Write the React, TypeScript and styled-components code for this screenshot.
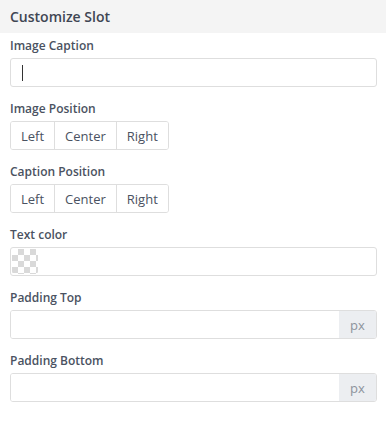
import React from 'react';
import styled, { createGlobalStyle } from 'styled-components';

const GlobalStyle = createGlobalStyle`
  html, body {
    margin: 0;
    padding: 0;
    background: #fff;
  }
  body {
    font-family: "Open Sans", "Liberation Sans", sans-serif;
    color: #4a5261;
  }
`;

const Panel = styled.div`
  width: 386px;
  background: #fff;
`;

const Header = styled.div`
  height: 33px;
  background: #f4f4f4;
  display: flex;
  align-items: center;
  padding: 0 10px;
  font-size: 14px;
  font-weight: 600;
  color: #3f4653;
`;

const Body = styled.div`
  display: flex;
  flex-direction: column;
  gap: 13px;
  padding: 4px 9px 0 10px;
`;

const Field = styled.div`
  display: flex;
  flex-direction: column;
`;

const Label = styled.div`
  font-size: 12px;
  font-weight: 600;
  line-height: 18px;
  margin-bottom: 3px;
  color: #4a5261;
`;

const InputBox = styled.div`
  height: 29px;
  box-sizing: border-box;
  border: 1px solid #dedede;
  border-radius: 3px;
  display: flex;
  align-items: stretch;
  overflow: hidden;
  background: #fff;
`;

const Caret = styled.span`
  width: 1px;
  height: 16px;
  background: #333;
  align-self: center;
  margin-left: 11px;
`;

const TextInput = styled.input`
  flex: 1;
  min-width: 0;
  border: none;
  outline: none;
  padding: 0 10px;
  font: inherit;
  font-size: 13px;
`;

const Addon = styled.div`
  width: 37px;
  background: #eceef1;
  display: flex;
  align-items: center;
  justify-content: center;
  font-size: 13px;
  color: #8d939c;
`;

const Swatch = styled.div`
  width: 26px;
  height: 25px;
  margin: 1px;
  border-radius: 3px;
  background-color: #fff;
  background-image:
    linear-gradient(45deg, #d9d9d9 25%, transparent 25%, transparent 75%, #d9d9d9 75%),
    linear-gradient(45deg, #d9d9d9 25%, transparent 25%, transparent 75%, #d9d9d9 75%);
  background-size: 12px 12px;
  background-position: 0 0, 6px 6px;
`;

const Group = styled.div`
  display: inline-flex;
  align-self: flex-start;
  height: 29px;
  box-sizing: border-box;
  border: 1px solid #dedede;
  border-radius: 3px;
  overflow: hidden;
`;

const GroupButton = styled.button`
  border: none;
  background: #fff;
  padding: 0 10px;
  font-family: inherit;
  font-size: 13px;
  color: #4a5261;
  cursor: pointer;

  & + & {
    border-left: 1px solid #dedede;
  }
`;

const positions = ['Left', 'Center', 'Right'];

const App: React.FC = () => {
  return (
    <>
      <GlobalStyle />
      <Panel>
        <Header>Customize Slot</Header>
        <Body>
          <Field>
            <Label>Image Caption</Label>
            <InputBox>
              <Caret />
            </InputBox>
          </Field>
          <Field>
            <Label>Image Position</Label>
            <Group>
              {positions.map(p => (
                <GroupButton key={p}>{p}</GroupButton>
              ))}
            </Group>
          </Field>
          <Field>
            <Label>Caption Position</Label>
            <Group>
              {positions.map(p => (
                <GroupButton key={p}>{p}</GroupButton>
              ))}
            </Group>
          </Field>
          <Field>
            <Label>Text color</Label>
            <InputBox>
              <Swatch />
            </InputBox>
          </Field>
          <Field>
            <Label>Padding Top</Label>
            <InputBox>
              <TextInput type="text" />
              <Addon>px</Addon>
            </InputBox>
          </Field>
          <Field>
            <Label>Padding Bottom</Label>
            <InputBox>
              <TextInput type="text" />
              <Addon>px</Addon>
            </InputBox>
          </Field>
        </Body>
      </Panel>
    </>
  );
};

export default App;
